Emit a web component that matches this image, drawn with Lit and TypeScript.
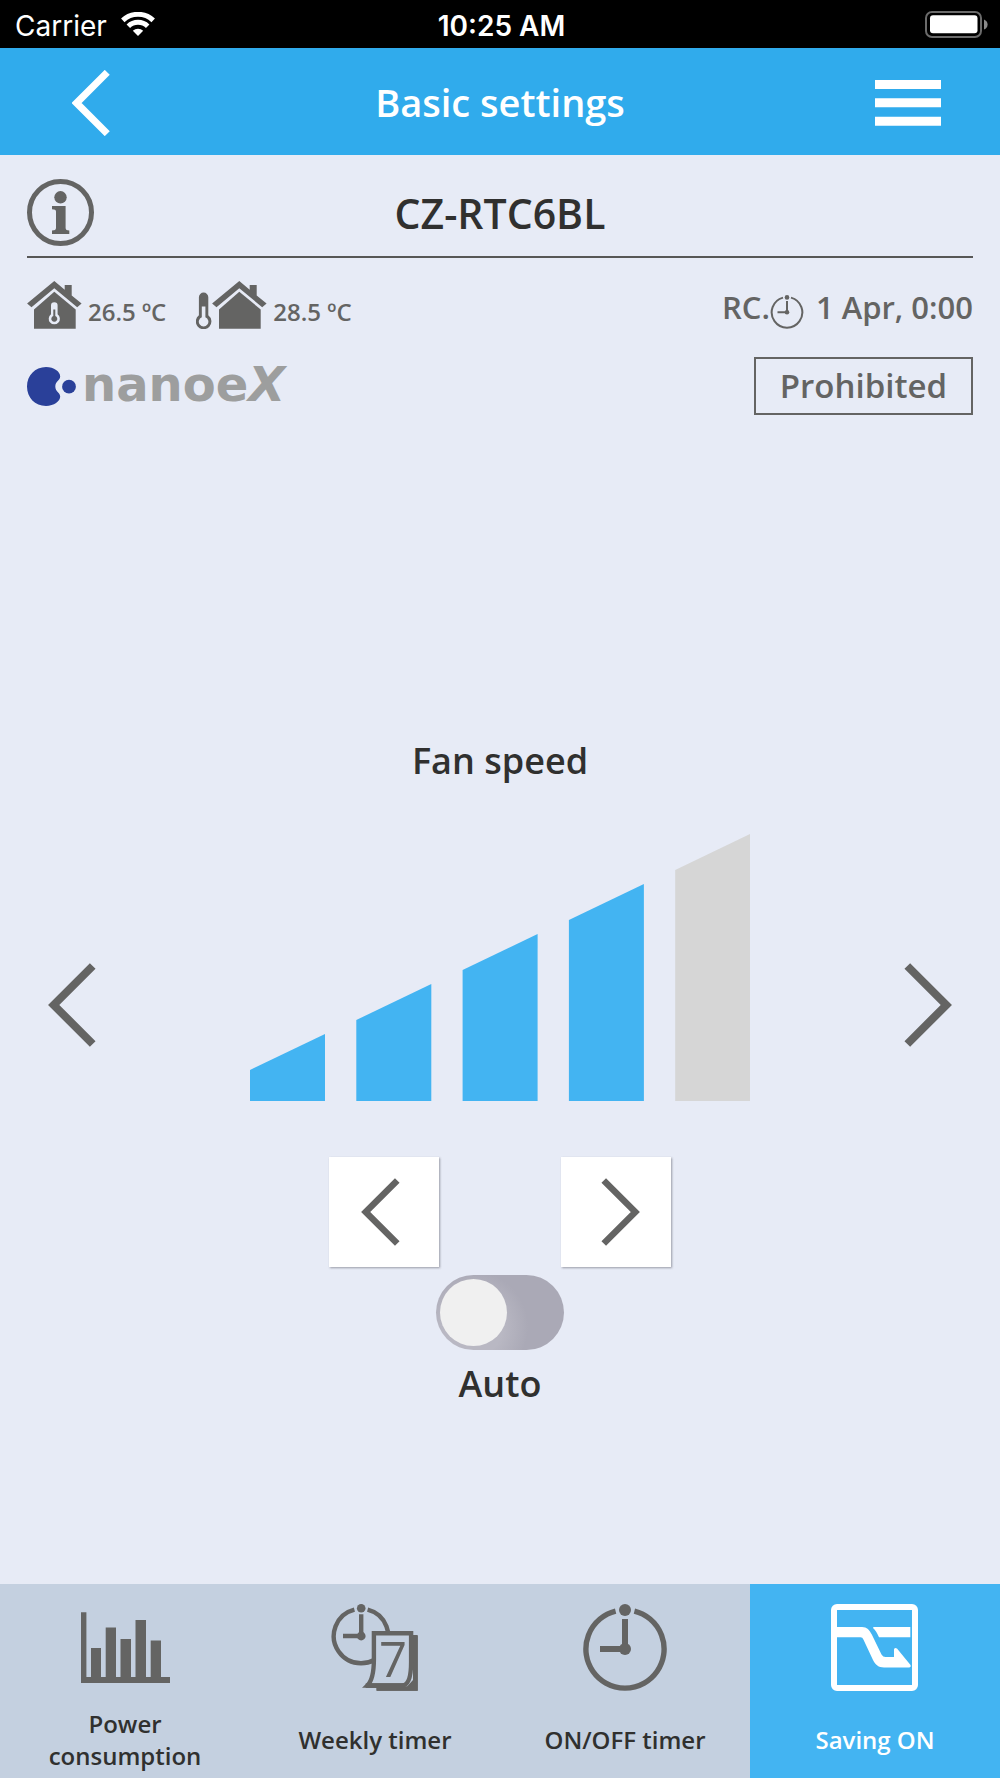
import { LitElement, html, svg, css } from "lit";
import { customElement, property, state } from "lit/decorators.js";

const houseShapes = svg`
  <path d="M27.3 0 L37.7 8.7 V4 H44.7 V14.5 L54.6 22.6 L50.2 26.2 L27.3 7.2 L4.5 26.2 L0.1 22.6 Z"></path>
  <path d="M27.3 10.8 L48.7 28.4 V47.7 H7 V28.4 Z"></path>`;

@customElement("chevron-icon")
export class ChevronIcon extends LitElement {
  @property() direction: "left" | "right" = "left";

  static styles = css`
    :host {
      display: block;
    }
    .chevron {
      display: block;
      width: 100%;
      height: 100%;
      fill: none;
      stroke: currentColor;
      stroke-width: var(--chevron-stroke, 8);
    }
  `;

  render() {
    const points = this.direction === "left" ? "44.7,3 5.7,42 44.7,81" : "3.3,3 42.3,42 3.3,81";
    return html`<svg class="chevron" viewBox="0 0 48 84" aria-hidden="true">
      <polyline points=${points}></polyline>
    </svg>`;
  }
}

@customElement("status-bar")
export class StatusBar extends LitElement {
  static styles = css`
    :host {
      display: grid;
      grid-template-columns: 1fr auto 1fr;
      align-items: center;
      height: 48px;
      padding: 3px 12px 0 15px;
      box-sizing: border-box;
      background: #000;
      color: #fff;
      font: 400 28px/32px Inter, "Liberation Sans", sans-serif;
    }
    .carrier {
      display: flex;
      align-items: center;
      gap: 14px;
    }
    .wifi {
      display: block;
      width: 34px;
      height: 24px;
      margin-bottom: 3px;
    }
    .time {
      font-weight: 600;
    }
    .battery {
      display: block;
      justify-self: end;
      width: 63px;
      height: 27px;
      margin-bottom: 3px;
    }
  `;

  render() {
    return html`
      <div class="carrier">
        <span>Carrier</span>
        <svg class="wifi" viewBox="0 0 34 24" aria-label="Wi-Fi">
          <g fill="none" stroke="#fff" stroke-width="5">
            <path d="M1.8 8.4 A22 22 0 0 1 32.2 8.4"></path>
            <path d="M7.3 14.2 A14 14 0 0 1 26.7 14.2"></path>
          </g>
          <path fill="#fff" d="M11.8 18.8 A7.6 7.6 0 0 1 22.2 18.8 L17 24 Z"></path>
        </svg>
      </div>
      <div class="time">10:25 AM</div>
      <svg class="battery" viewBox="0 0 63 27" aria-label="Battery full">
        <rect x="1" y="1" width="55" height="25" rx="6" fill="none" stroke="#6b6b6b" stroke-width="2"></rect>
        <rect x="5" y="4.3" width="47.5" height="18" rx="3" fill="#fff"></rect>
        <path d="M59 8.5 Q62.6 10 62.6 13.5 T59 18.5 Z" fill="#8a8a8a"></path>
      </svg>
    `;
  }
}

@customElement("device-info")
export class DeviceInfo extends LitElement {
  static styles = css`
    :host {
      display: block;
      padding: 24px 27px 0;
      color: #646463;
    }
    svg {
      display: block;
      flex: none;
    }
    .title-row {
      display: grid;
      grid-template-columns: 67px 1fr 67px;
      align-items: center;
      padding-bottom: 10px;
      border-bottom: 2px solid #575756;
    }
    .info-button {
      padding: 0;
      border: 0;
      background: none;
      color: inherit;
      cursor: pointer;
    }
    .info-icon {
      width: 67px;
      height: 67px;
    }
    .name {
      margin: 0;
      text-align: center;
      color: #30302f;
      font-size: 41px;
      line-height: 56px;
      font-weight: 600;
    }
    .row {
      display: flex;
      justify-content: space-between;
    }
    .readings {
      height: 48px;
      margin-top: 23px;
      align-items: flex-end;
    }
    .temperatures,
    .reading,
    .clock {
      display: flex;
      align-items: flex-end;
    }
    .temperatures {
      gap: 30px;
    }
    .reading {
      gap: 6px;
      font-size: 24px;
      line-height: 34px;
      font-weight: 600;
    }
    .clock {
      font-size: 31px;
      line-height: 44px;
      font-weight: 600;
    }
    .clock-icon {
      width: 34px;
      height: 34px;
      margin-right: 12px;
    }
    .badges {
      margin-top: 28px;
      align-items: center;
    }
    .nanoe {
      display: flex;
      align-items: center;
      gap: 6px;
      color: #9d9e9e;
      font-family: "DejaVu Sans", sans-serif;
      font-weight: 700;
      font-size: 48px;
      line-height: 48px;
    }
    .nanoe-word {
      padding-bottom: 4px;
    }
    .nanoe-mark {
      font-style: oblique;
    }
    .prohibited {
      box-sizing: border-box;
      padding: 5px 24px;
      border: 2px solid #646463;
      font-size: 33px;
      line-height: 44px;
      font-weight: 600;
    }
  `;

  render() {
    return html`
      <div class="title-row">
        <button class="info-button" aria-label="Information">
          <svg class="info-icon" viewBox="0 0 67 67" aria-hidden="true">
            <circle cx="33.5" cy="33.5" r="31" fill="none" stroke="currentColor" stroke-width="5"></circle>
            <circle cx="33.5" cy="18.3" r="6.2" fill="currentColor"></circle>
            <path fill="currentColor" d="M25 27 H38.6 V49 Q38.6 51.5 42.3 51.5 V55 H25 V51.5 Q29 51.5 29 49 V32.5 Q29 30.3 25 30.3 Z"></path>
          </svg>
        </button>
        <h2 class="name">CZ-RTC6BL</h2>
      </div>

      <div class="row readings">
        <div class="temperatures">
          <div class="reading">
            <svg width="55" height="48" viewBox="0 0 55 48" fill="currentColor" aria-label="Indoor temperature">
              ${houseShapes}
              <path fill="#e7ebf6" d="M24 24.5 A3.3 3.3 0 0 1 30.6 24.5 V33.2 A5.6 5.6 0 1 1 24 33.2 Z"></path>
              <path d="M26.3 28.5 H28.3 V35 A3 3 0 1 1 26.3 35 Z"></path>
            </svg>
            <span>26.5 ºC</span>
          </div>
          <div class="reading">
            <svg width="71" height="48" viewBox="0 0 71 48" fill="currentColor" aria-label="Outdoor temperature">
              <path d="M2.9 16.3 A4.7 4.7 0 0 1 12.3 16.3 V34.2 A7.8 7.8 0 1 1 2.9 34.2 Z"></path>
              <path fill="#e7ebf6" d="M5.8 25.5 H9.4 V36.2 A4.8 4.8 0 1 1 5.8 36.2 Z"></path>
              <g transform="translate(16 0)">${houseShapes}</g>
            </svg>
            <span>28.5 ºC</span>
          </div>
        </div>
        <div class="clock">
          <span>RC.</span>
          <svg class="clock-icon" viewBox="0 0 34 34" aria-hidden="true">
            <g fill="none" stroke="currentColor" stroke-width="2">
              <path d="M21 2.6 A15.3 15.3 0 1 1 13 2.6"></path>
              <path d="M17 6 V17.3 H7.5"></path>
            </g>
            <circle cx="17" cy="2.4" r="2.3" fill="currentColor"></circle>
            <circle cx="17" cy="17.3" r="2.3" fill="currentColor"></circle>
          </svg>
          <span>1 Apr, 0:00</span>
        </div>
      </div>

      <div class="row badges">
        <div class="nanoe">
          <svg width="49" height="39" viewBox="0 0 49 39" fill="#2a4099" aria-hidden="true">
            <path d="M19 0 C27 0 33.2 4.6 33.2 9.4 C33.2 13.4 28.3 14 28.3 19.5 C28.3 25 33.2 25.6 33.2 29.6 C33.2 34.4 27 39 19 39 C8 39 0 30.5 0 19.5 C0 8.5 8 0 19 0 Z"></path>
            <circle cx="42" cy="19.7" r="6.9"></circle>
          </svg>
          <span class="nanoe-word">nanoe<span class="nanoe-mark">X</span></span>
        </div>
        <div class="prohibited">Prohibited</div>
      </div>
    `;
  }
}

@customElement("fan-speed")
export class FanSpeed extends LitElement {
  @state() private level = 4;
  @state() private auto = false;

  static styles = css`
    :host {
      display: flex;
      flex-direction: column;
      align-items: center;
      color: #30302f;
      font-size: 36px;
      line-height: 48px;
      font-weight: 600;
    }
    :host::before {
      content: "";
      flex: 11;
    }
    :host::after {
      content: "";
      flex: 6;
    }
    button {
      padding: 0;
      border: 0;
      background: none;
      color: #646463;
      cursor: pointer;
    }
    .heading {
      margin: 0;
      font: inherit;
    }
    .carousel {
      display: flex;
      justify-content: space-between;
      align-items: flex-end;
      box-sizing: border-box;
      width: 100%;
      margin-top: 49px;
      padding: 0 48px;
    }
    .page {
      margin-bottom: 54px;
    }
    .page-icon {
      width: 48px;
      height: 84px;
    }
    .bars {
      display: block;
      width: 500px;
      max-width: 60%;
    }
    .on {
      fill: #43b4f2;
    }
    .off {
      fill: #d6d6d6;
    }
    .steps {
      display: flex;
      gap: 122px;
      margin-top: 56px;
    }
    .step {
      display: grid;
      place-items: center;
      width: 110px;
      height: 110px;
      background: #fff;
      box-shadow: 1px 1px 2px rgba(60, 60, 70, 0.45);
    }
    .step-icon {
      width: 39px;
      height: 68px;
    }
    .prev {
      padding-right: 8px;
    }
    .next {
      padding-left: 8px;
    }
    .switch {
      appearance: none;
      display: block;
      box-sizing: border-box;
      width: 128px;
      height: 75px;
      margin: 8px 0 10px;
      padding: 4px;
      border-radius: 38px;
      background: radial-gradient(circle at 36px 52px, #b9b8c3 30px, #aaa9b6 56px);
      cursor: pointer;
    }
    .switch::before {
      content: "";
      display: block;
      width: 67px;
      height: 67px;
      border-radius: 50%;
      background: #f0f0f0;
    }
    .switch:checked {
      background: #43b4f2;
    }
    .switch:checked::before {
      margin-left: auto;
    }
  `;

  private change(step: number) {
    this.level = Math.min(5, Math.max(1, this.level + step));
  }

  render() {
    const bars = [1, 2, 3, 4, 5];
    return html`
      <h3 class="heading">Fan speed</h3>
      <div class="carousel">
        <button class="page" aria-label="Previous setting">
          <chevron-icon class="page-icon" direction="left"></chevron-icon>
        </button>
        <svg class="bars" viewBox="0 0 500 267" role="img" aria-label="Fan speed level">
          ${bars.map((n) => {
            const x = (n - 1) * 106.3;
            const top = 250 - n * 50;
            return svg`<polygon class=${n <= this.level ? "on" : "off"}
              points="${x},${top + 36} ${x + 75},${top} ${x + 75},267 ${x},267"></polygon>`;
          })}
        </svg>
        <button class="page" aria-label="Next setting">
          <chevron-icon class="page-icon" direction="right"></chevron-icon>
        </button>
      </div>
      <div class="steps">
        <button class="step prev" aria-label="Decrease fan speed" @click=${() => this.change(-1)}>
          <chevron-icon class="step-icon" direction="left"></chevron-icon>
        </button>
        <button class="step next" aria-label="Increase fan speed" @click=${() => this.change(1)}>
          <chevron-icon class="step-icon" direction="right"></chevron-icon>
        </button>
      </div>
      <input
        class="switch"
        id="auto"
        type="checkbox"
        role="switch"
        .checked=${this.auto}
        @change=${(e: Event) => (this.auto = (e.target as HTMLInputElement).checked)}
      />
      <label for="auto">Auto</label>
    `;
  }
}

const powerIcon = html`<svg width="90" height="88" viewBox="0 0 90 88" fill="currentColor" aria-hidden="true">
  <path d="M1 8.3 H6.4 V73 H90 V79 H1 Z"></path>
  <path d="M11 44 H21 V74 H11 Z M25.7 23.5 H36 V74 H25.7 Z M40.5 35 H51 V74 H40.5 Z M55.5 16 H66 V74 H55.5 Z M70.7 36.5 H81 V74 H70.7 Z"></path>
</svg>`;

const weeklyIcon = html`<svg width="88" height="88" viewBox="0 0 88 88" aria-hidden="true">
  <g fill="none" stroke="currentColor" stroke-width="4.4">
    <path d="M36.6 5.6 A27.2 27.2 0 1 1 23.4 5.6"></path>
    <path d="M30.2 10.3 V32 H12"></path>
    <path fill="currentColor" stroke="none" d="M82 31 H86.7 V86.7 H45.3 V82.5 H76 L82 76 Z"></path>
    <path fill="#c4d0e0" d="M42.9 29.2 H80.1 V58 C80.1 70 78 81.5 71 81.5 H36.4 C41 77 42.9 65 42.9 55 Z"></path>
    <path d="M84.6 32 V84.6 H46" stroke-width="4.2"></path>
    <path fill="currentColor" stroke="none" d="M34.7 79.3 H73 V84 H34.7 Z"></path>
  </g>
  <circle cx="30.2" cy="4.3" r="4.3" fill="currentColor"></circle>
  <circle cx="30.2" cy="32" r="4.4" fill="currentColor"></circle>
  <text x="62" y="73" text-anchor="middle" fill="currentColor" font-family="Open Sans, sans-serif" font-size="49" font-weight="400">7</text>
</svg>`;

const timerIcon = html`<svg width="84" height="88" viewBox="0 0 84 88" aria-hidden="true">
  <g fill="none" stroke="currentColor">
    <path d="M51.4 7.1 A39.1 39.1 0 1 1 32.6 7.1" stroke-width="5.4"></path>
    <path d="M42 15 V45 H17" stroke-width="6"></path>
  </g>
  <circle cx="42" cy="6" r="6" fill="currentColor"></circle>
  <circle cx="42" cy="45" r="6" fill="currentColor"></circle>
</svg>`;

const savingIcon = html`<svg width="88" height="88" viewBox="0 0 88 88" aria-hidden="true">
  <rect x="3" y="3" width="81" height="81" rx="3" fill="none" stroke="currentColor" stroke-width="6"></rect>
  <path fill="currentColor" d="M5 23 H31 C36 23 38.5 26 40.8 30.5 L50.5 50.5 Q52 53 54.5 53 H63 V45.5 Q63.3 43 66 44.6 L79.5 61 Q80.3 63.4 78 63.4 H53 C47.5 63.4 44.5 61 42 56 L32.4 35.5 Q31.6 33.3 29.5 33.3 H5 Z"></path>
  <path fill="currentColor" d="M42.5 23 H79.3 V33.3 H48 C46 29 44.5 26 42 24 Z"></path>
</svg>`;

const tabs = [
  { label: "Power consumption", icon: powerIcon },
  { label: "Weekly timer", icon: weeklyIcon },
  { label: "ON/OFF timer", icon: timerIcon },
  { label: "Saving ON", icon: savingIcon, active: true },
];

@customElement("app-root")
export class AppRoot extends LitElement {
  static styles = css`
    :host {
      display: flex;
      flex-direction: column;
      min-height: 100vh;
      background: #e7ebf6;
      font-family: "Open Sans", "Noto Sans", sans-serif;
    }
    button {
      padding: 0;
      border: 0;
      background: none;
      color: inherit;
      font: inherit;
      cursor: pointer;
    }
    .header {
      display: grid;
      grid-template-columns: 66px 1fr 66px;
      align-items: center;
      height: 107px;
      padding: 2px 59px 0 72px;
      box-sizing: border-box;
      background: #30abec;
      color: #fff;
    }
    .back-icon {
      width: 38px;
      height: 66px;
      --chevron-stroke: 9;
    }
    .heading {
      margin: 0;
      padding: 0 13px 2px 0;
      text-align: center;
      font-size: 38px;
      line-height: 52px;
      font-weight: 600;
    }
    .menu-icon {
      display: block;
    }
    .panel {
      flex: 1;
    }
    .tabs {
      display: grid;
      grid-template-columns: repeat(4, 1fr);
      background: #c4d0e0;
      color: #30302f;
      font-size: 24px;
      line-height: 32px;
      font-weight: 600;
    }
    .tab {
      display: flex;
      flex-direction: column;
      align-items: center;
      gap: 16px;
      padding: 20px 40px 6px;
    }
    .tab-icon {
      color: #646463;
    }
    .tab-icon svg {
      display: block;
    }
    .tab-label {
      display: flex;
      align-items: center;
      height: 64px;
    }
    .active,
    .active .tab-icon {
      color: #fff;
    }
    .active {
      background: #43b4f2;
    }
  `;

  render() {
    return html`
      <status-bar></status-bar>
      <header class="header">
        <button aria-label="Back">
          <chevron-icon class="back-icon" direction="left"></chevron-icon>
        </button>
        <h1 class="heading">Basic settings</h1>
        <button aria-label="Menu">
          <svg class="menu-icon" width="66" height="46" viewBox="0 0 66 46" fill="currentColor" aria-hidden="true">
            <path d="M0 0 H66 V9 H0 Z M0 18.3 H66 V27.3 H0 Z M0 36.7 H66 V45.7 H0 Z"></path>
          </svg>
        </button>
      </header>
      <device-info></device-info>
      <fan-speed class="panel"></fan-speed>
      <nav class="tabs">
        ${tabs.map(
          (tab) => html`<button class="tab ${tab.active ? "active" : ""}">
            <span class="tab-icon">${tab.icon}</span>
            <span class="tab-label">${tab.label}</span>
          </button>`
        )}
      </nav>
    `;
  }
}
